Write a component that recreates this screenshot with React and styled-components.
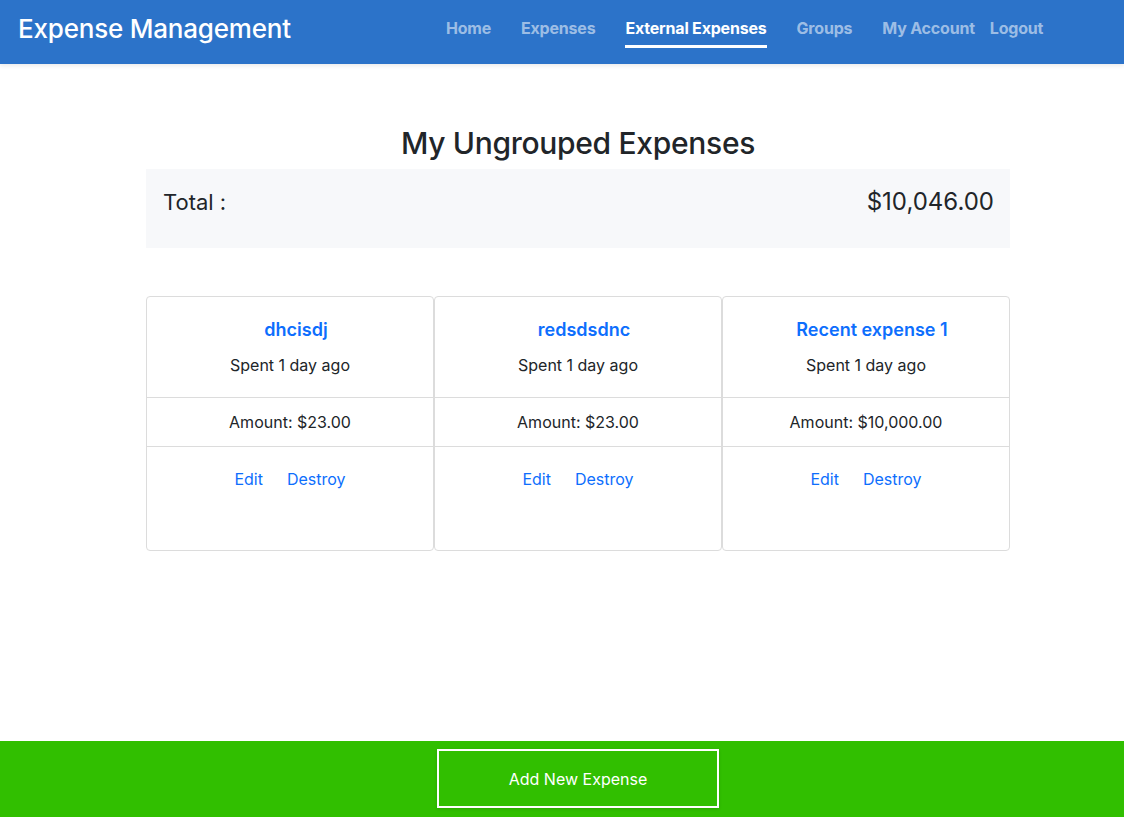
import React from "react";
import styled, { createGlobalStyle } from "styled-components";

const GlobalStyle = createGlobalStyle`
  html, body {
    margin: 0;
    padding: 0;
    background: #fff;
    font-family: Inter, "Noto Sans", "Liberation Sans", sans-serif;
    color: #212529;
  }
  #root {
    min-height: 100vh;
    display: flex;
    flex-direction: column;
  }
`;

const NavBar = styled.nav`
  height: 64px;
  background-color: #2c73c9;
  display: flex;
  align-items: flex-start;
  padding: 13px 18px 0;
  box-sizing: border-box;
  box-shadow: 0 2px 4px rgba(0, 0, 0, 0.08);
`;

const Brand = styled.div`
  color: #fff;
  font-size: 26px;
  font-weight: 500;
  line-height: 32px;
  letter-spacing: -0.2px;
`;

const NavLinks = styled.div`
  display: flex;
  align-items: center;
  margin-left: 155px;
  margin-top: 4px;
  gap: 30px;
`;

const NavLink = styled.a`
  position: relative;
  font-size: 16px;
  font-weight: 700;
  line-height: 22px;
  letter-spacing: -0.2px;
  color: ${(p) => (p.$active ? "#fff" : "rgba(255, 255, 255, 0.55)")};
  margin-right: ${(p) => (p.$tight ? "-15px" : "0")};
  text-decoration: none;

  &::after {
    content: "";
    display: ${(p) => (p.$active ? "block" : "none")};
    position: absolute;
    left: 0;
    right: 0;
    bottom: -9px;
    height: 3px;
    background: #fff;
  }
`;

const Page = styled.div`
  flex: 1;
  display: flex;
  flex-direction: column;
  padding-left: 32px;
`;

const Main = styled.main`
  flex: 1;
  width: 864px;
  margin: 0 auto;
  padding-top: 60px;
`;

const Heading = styled.h1`
  margin: 0;
  text-align: center;
  font-size: 30px;
  font-weight: 500;
  line-height: 38px;
  letter-spacing: -0.3px;
`;

const TotalBox = styled.div`
  margin-top: 7px;
  height: 79px;
  background: #f7f8fa;
  display: flex;
  justify-content: space-between;
  align-items: baseline;
  padding: 17px 16px 0 17px;
  box-sizing: border-box;
  line-height: 32px;
`;

const TotalLabel = styled.span`
  font-size: 22px;
`;

const TotalValue = styled.span`
  font-size: 24px;
`;

const CardRow = styled.div`
  margin-top: 48px;
  display: grid;
  grid-template-columns: repeat(3, 1fr);
`;

const Card = styled.div`
  height: 255px;
  border: 1px solid #dcdcdc;
  border-radius: 4px;
  box-sizing: border-box;
  display: flex;
  flex-direction: column;
  text-align: center;
`;

const CardHeader = styled.div`
  height: 101px;
  border-bottom: 1px solid #dcdcdc;
  box-sizing: border-box;
  padding-top: 21px;
`;

const CardTitle = styled.div`
  color: #0d6efd;
  font-size: 18px;
  font-weight: 600;
  line-height: 24px;
  padding-left: 12px;
`;

const Spent = styled.div`
  margin-top: 11px;
  font-size: 16px;
  line-height: 24px;
`;

const Amount = styled.div`
  height: 49px;
  border-bottom: 1px solid #dcdcdc;
  box-sizing: border-box;
  display: flex;
  align-items: center;
  justify-content: center;
  font-size: 16px;
`;

const Actions = styled.div`
  display: flex;
  justify-content: center;
  gap: 24px;
  padding-top: 20px;
`;

const ActionLink = styled.a`
  color: #0d6efd;
  font-size: 16px;
  line-height: 24px;
  text-decoration: none;
`;

const Footer = styled.footer`
  height: 76px;
  background: #31bf00;
  display: flex;
  justify-content: center;
  padding-top: 8px;
  box-sizing: border-box;
`;

const AddButton = styled.button`
  width: 282px;
  height: 59px;
  margin-left: 32px;
  background: transparent;
  border: 2px solid #fff;
  color: #fff;
  font-family: inherit;
  font-size: 16px;
  box-shadow: 0 1px 3px rgba(0, 0, 0, 0.15);
`;

const expenses = [
  { name: "dhcisdj", amount: "$23.00" },
  { name: "redsdsdnc", amount: "$23.00" },
  { name: "Recent expense 1", amount: "$10,000.00" },
];

const links = ["Home", "Expenses", "External Expenses", "Groups", "My Account", "Logout"];

const App = () => (
  <>
    <GlobalStyle />
    <NavBar>
      <Brand>Expense Management</Brand>
      <NavLinks>
        {links.map((l) => (
          <NavLink
            key={l}
            href="#"
            $active={l === "External Expenses"}
            $tight={l === "My Account"}
          >
            {l}
          </NavLink>
        ))}
      </NavLinks>
    </NavBar>
    <Page>
      <Main>
        <Heading>My Ungrouped Expenses</Heading>
        <TotalBox>
          <TotalLabel>Total :</TotalLabel>
          <TotalValue>$10,046.00</TotalValue>
        </TotalBox>
        <CardRow>
          {expenses.map((e) => (
            <Card key={e.name}>
              <CardHeader>
                <CardTitle>{e.name}</CardTitle>
                <Spent>Spent 1 day ago</Spent>
              </CardHeader>
              <Amount>Amount: {e.amount}</Amount>
              <Actions>
                <ActionLink href="#">Edit</ActionLink>
                <ActionLink href="#">Destroy</ActionLink>
              </Actions>
            </Card>
          ))}
        </CardRow>
      </Main>
    </Page>
    <Footer>
      <AddButton>Add New Expense</AddButton>
    </Footer>
  </>
);

export default App;
